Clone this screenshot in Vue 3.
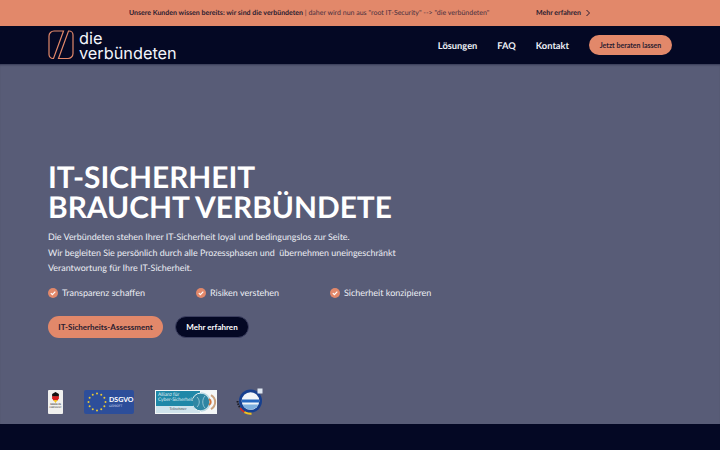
<script setup>
const checks = ['Transparenz schaffen', 'Risiken verstehen', 'Sicherheit konzipieren']
const stars = Array.from({ length: 12 }, (_, i) => {
  const a = (i * Math.PI) / 6
  return { x: 13 + Math.cos(a) * 8.5, y: 12 + Math.sin(a) * 8.5 }
})
</script>

<template>
  <div class="page">
    <div class="topbar">
      <p class="topbar-text">
        <b>Unsere Kunden wissen bereits: wir sind die verbündeten</b> | daher wird nun aus "root IT-Security" --&gt; "die verbündeten"
      </p>
      <a class="topbar-link">
        Mehr erfahren
        <svg width="6" height="8" viewBox="0 0 6 8"><path d="M1.5 1l3 3-3 3" fill="none" stroke="#2a1c30" stroke-width="1" /></svg>
      </a>
    </div>

    <header class="nav">
      <div class="logo">
        <svg width="26" height="30" viewBox="0 0 26 30" fill="none" stroke="#e2886a" stroke-width="1.2">
          <path d="M6 1h9.500L5.500 28.500H5a4 4 0 0 1-4-4V6a5 5 0 0 1 5-5z" />
          <path d="M20 28.500h-9.500L20.500 1H21a4 4 0 0 1 4 4v18.500a5 5 0 0 1-5 5z" />
        </svg>
        <div class="logo-text">die<br />verbündeten</div>
      </div>
      <nav class="nav-links">
        <a>Lösungen</a>
        <a>FAQ</a>
        <a>Kontakt</a>
        <button type="button" class="nav-btn">Jetzt beraten lassen</button>
      </nav>
    </header>

    <main class="hero">
      <h1>IT-SICHERHEIT<br />BRAUCHT VERBÜNDETE</h1>
      <p class="lead first">Die Verbündeten stehen Ihrer IT-Sicherheit loyal und bedingungslos zur Seite.</p>
      <p class="lead">Wir begleiten Sie persönlich durch alle Prozessphasen und&nbsp; übernehmen uneingeschränkt<br />Verantwortung für Ihre IT-Sicherheit.</p>

      <ul class="checks">
        <li v-for="c in checks" :key="c">
          <svg width="10" height="10" viewBox="0 0 10 10">
            <circle cx="5" cy="5" r="5" fill="#e2886a" />
            <path d="M2.800 5.100l1.600 1.600 2.900-3" fill="none" stroke="#fff" stroke-width="1.200" />
          </svg>
          {{ c }}
        </li>
      </ul>

      <div class="actions">
        <button type="button" class="btn-primary">IT-Sicherheits-Assessment</button>
        <button type="button" class="btn-dark">Mehr erfahren</button>
      </div>

      <div class="badges">
        <div class="badge-de">
          <svg width="9" height="11" viewBox="0 0 10 13">
            <path d="M5 0l4 2.500v3H1v-3z" fill="#111" />
            <path d="M1 5h8v2.500L7.500 10h-5L1 7.500z" fill="#d81e1e" />
            <path d="M2.500 9.500h5L5 13z" fill="#f2c21a" />
          </svg>
          <span class="de-l1">MADE IN</span>
          <span class="de-l2">GERMANY</span>
        </div>
        <div class="badge-dsgvo">
          <svg width="26" height="24" viewBox="0 0 26 24">
            <circle v-for="(s, i) in stars" :key="i" :cx="s.x" :cy="s.y" r="1" fill="#e9c934" />
          </svg>
          <div class="dsgvo-text">
            <b>DSGVO</b>
            <span>GEPRÜFT</span>
          </div>
        </div>
        <div class="badge-acs">
          <div class="acs-main">
            <div class="acs-title">Allianz für<br />Cyber-Sicherheit</div>
          </div>
          <div class="acs-foot">Teilnehmer</div>
          <svg class="acs-art" width="24" height="22" viewBox="0 0 24 22">
            <circle cx="8" cy="11" r="9" fill="#2f86a3" stroke="#e8f2f5" stroke-width="1" />
            <path d="M8 2a9 9 0 0 1 0 18" fill="none" stroke="#bcd9e2" stroke-width="1.500" />
            <path d="M4 6c3 3 3 7 0 10M12 5c-3 3-3 9 0 12" fill="none" stroke="#a9d0dc" stroke-width=".8" />
            <path d="M18 4a8 8 0 0 1 0 14" fill="none" stroke="#c9a27f" stroke-width="2" />
            <path d="M16 8a3.500 3.500 0 0 1 0 6" fill="none" stroke="#d0753f" stroke-width="2" />
          </svg>
        </div>
        <svg class="badge-round" width="27" height="27" viewBox="0 0 27 27">
          <path d="M1.500 13a13 13 0 0 0 3 7" fill="none" stroke="#1c1c24" stroke-width="2" stroke-dasharray="1.500 1" />
          <path d="M4.500 20a12 12 0 0 0 4 4" fill="none" stroke="#d92a22" stroke-width="2" />
          <path d="M8.500 24a12 12 0 0 0 7 1.500" fill="none" stroke="#f0c020" stroke-width="2.500" />
          <circle cx="14.500" cy="13" r="11.500" fill="#17408f" />
          <circle cx="14.500" cy="13" r="8.800" fill="#f1f5f9" />
          <path d="M5.900 11.500h17.200v3H5.900z" fill="#2768bf" />
          <path d="M6.500 16.500h16a8.800 8.800 0 0 1-16 0z" fill="#7fb0de" />
          <rect x="21.500" y="0.500" width="5" height="5" fill="#dfe8f2" />
        </svg>
      </div>
    </main>

    <footer class="bottom"></footer>
  </div>
</template>

<style>
html, body { margin: 0; background: #040824; }
</style>

<style scoped>
.page {
  width: 720px;
  height: 450px;
  display: flex;
  flex-direction: column;
  overflow: hidden;
  font-family: Lato, "Liberation Sans", sans-serif;
  text-rendering: geometricPrecision;
  background: #040824;
}

.topbar {
  height: 26px;
  flex-shrink: 0;
  background: #e2886a;
  display: flex;
  align-items: center;
  padding-left: 129px;
  font-size: 7px;
}

.topbar-text { margin: 0; width: 407px; white-space: nowrap; color: #4a3040; }
.topbar-text b { color: #2a1c30; font-weight: 700; }

.topbar-link {
  display: flex;
  align-items: center;
  gap: 4px;
  font-weight: 700;
  color: #2a1c30;
}

.nav {
  height: 38px;
  flex-shrink: 0;
  display: flex;
  align-items: center;
  justify-content: space-between;
  padding: 0 48px;
  background: #040824;
}

.logo { display: flex; align-items: center; gap: 5px; }

.logo-text {
  font-family: Inter, sans-serif;
  font-weight: 400;
  font-size: 16.300px;
  line-height: 14.500px;
  color: #f2f4fa;
  padding-top: 1px;
}

.nav-links {
  display: flex;
  align-items: center;
  gap: 20px;
  font-size: 9.300px;
  font-weight: 700;
  color: #eef0f6;
}

.nav-btn {
  font-family: inherit;
  font-size: 7px;
  font-weight: 700;
  color: #2a1c30;
  background: #e2886a;
  border: none;
  border-radius: 10px;
  width: 83px;
  height: 20px;
  padding: 0;
}

.hero {
  flex: 1;
  min-height: 0;
  background: #585c77;
  padding: 99px 48px 0;
  color: #fff;
  box-shadow: inset 0 2px 2px -1px rgba(4, 8, 36, 0.4);
}

h1 {
  margin: 0 0 6px;
  font-size: 29.850px;
  line-height: 30px;
  font-weight: 700;
}

.lead { margin: 0; font-size: 8.930px; line-height: 15px; color: #eceef4; }
.lead.first { margin-bottom: 1px; }

.checks {
  list-style: none;
  margin: 11px 0 0;
  padding: 0;
  display: grid;
  grid-template-columns: 148px 134px auto;
  font-size: 9px;
  line-height: 14px;
  color: #eceef4;
}

.checks li { display: flex; align-items: center; gap: 4px; }

.actions { display: flex; align-items: center; gap: 12px; margin-top: 16px; }

.btn-primary {
  font-family: inherit;
  font-size: 8px;
  font-weight: 700;
  color: #2a1c30;
  background: #e2886a;
  border: none;
  border-radius: 11px;
  width: 115px;
  height: 22px;
  padding: 0;
}

.btn-dark {
  font-family: inherit;
  font-size: 8px;
  font-weight: 700;
  color: #fff;
  background: #040824;
  border: 1px solid #3c3f60;
  border-radius: 11px;
  width: 74px;
  height: 22px;
  padding: 0;
}

.badges { display: flex; align-items: center; margin-top: 50px; }

.badge-de {
  width: 15px;
  height: 24px;
  background: #f0f0ee;
  border-radius: 1px;
  display: flex;
  flex-direction: column;
  align-items: center;
  padding-top: 2px;
  box-sizing: border-box;
  color: #333;
}

.de-l1, .de-l2 { font-size: 2.500px; line-height: 3px; font-weight: 700; white-space: nowrap; }
.de-l2 { font-weight: 400; }

.badge-dsgvo {
  margin-left: 21px;
  width: 50px;
  height: 24px;
  background: #2d4e9a;
  border-radius: 2px;
  display: flex;
  align-items: center;
}

.dsgvo-text { display: flex; flex-direction: column; margin-left: -1px; color: #fff; }
.dsgvo-text b { font-size: 7px; line-height: 8px; }
.dsgvo-text span { font-size: 3px; line-height: 4px; color: #d5dcef; }

.badge-acs {
  margin-left: 21px;
  width: 62px;
  height: 24px;
  box-sizing: border-box;
  padding: 1px;
  background: #f4f7f8;
  position: relative;
}

.acs-main {
  width: 44px;
  height: 15px;
  background: #1f88a8;
}

.acs-title { font-size: 4.800px; line-height: 5.500px; color: #e6f2f6; padding: 2px 0 0 2px; white-space: nowrap; }

.acs-art { position: absolute; right: 0; top: 1px; }

.acs-foot {
  width: 44px;
  height: 7px;
  background: #cfe3ec;
  color: #334;
  font-size: 3.500px;
  line-height: 7px;
  text-align: center;
}

.badge-round { margin-left: 19px; }

.bottom { height: 26px; flex-shrink: 0; background: #040824; }
</style>
